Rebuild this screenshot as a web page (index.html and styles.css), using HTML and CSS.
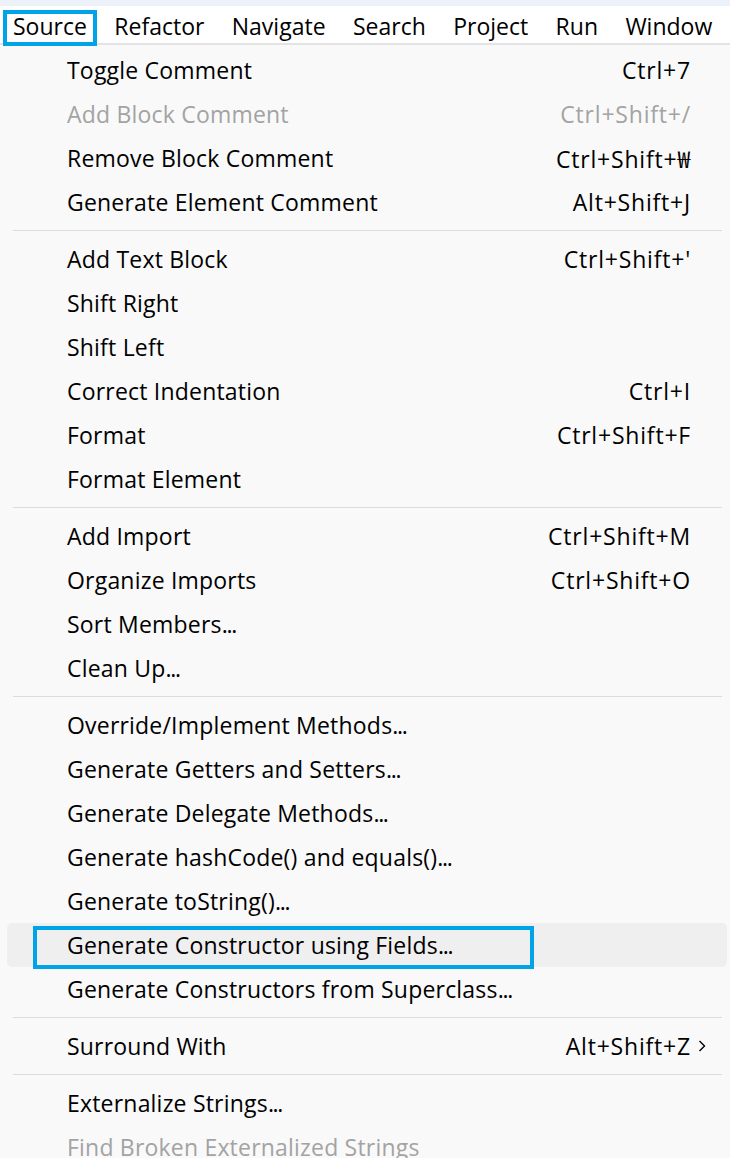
FILE: index.html
```html
<!DOCTYPE html>
<html lang="en">
<head>
<meta charset="utf-8">
<title>Source menu</title>
<link rel="stylesheet" href="styles.css">
</head>
<body>
<div class="topstrip"></div>
<nav class="menubar">
  <span class="mb-item active">Source</span>
  <span class="mb-item">Refactor</span>
  <span class="mb-item">Navigate</span>
  <span class="mb-item">Search</span>
  <span class="mb-item">Project</span>
  <span class="mb-item">Run</span>
  <span class="mb-item">Window</span>
</nav>
<div class="menu">
  <div class="row"><span class="label">Toggle Comment</span><span class="key">Ctrl+7</span></div>
  <div class="row disabled"><span class="label">Add Block Comment</span><span class="key">Ctrl+Shift+/</span></div>
  <div class="row"><span class="label">Remove Block Comment</span><span class="key">Ctrl+Shift+₩</span></div>
  <div class="row"><span class="label">Generate Element Comment</span><span class="key">Alt+Shift+J</span></div>
  <div class="sep"></div>
  <div class="row"><span class="label">Add Text Block</span><span class="key">Ctrl+Shift+'</span></div>
  <div class="row"><span class="label">Shift Right</span></div>
  <div class="row"><span class="label">Shift Left</span></div>
  <div class="row"><span class="label">Correct Indentation</span><span class="key">Ctrl+I</span></div>
  <div class="row"><span class="label">Format</span><span class="key">Ctrl+Shift+F</span></div>
  <div class="row"><span class="label">Format Element</span></div>
  <div class="sep"></div>
  <div class="row"><span class="label">Add Import</span><span class="key">Ctrl+Shift+M</span></div>
  <div class="row"><span class="label">Organize Imports</span><span class="key">Ctrl+Shift+O</span></div>
  <div class="row"><span class="label">Sort Members<span class="dots">...</span></span></div>
  <div class="row"><span class="label">Clean Up<span class="dots">...</span></span></div>
  <div class="sep"></div>
  <div class="row"><span class="label">Override/Implement Methods<span class="dots">...</span></span></div>
  <div class="row"><span class="label">Generate Getters and Setters<span class="dots">...</span></span></div>
  <div class="row"><span class="label">Generate Delegate Methods<span class="dots">...</span></span></div>
  <div class="row"><span class="label">Generate hashCode() and equals()<span class="dots">...</span></span></div>
  <div class="row"><span class="label">Generate toString()<span class="dots">...</span></span></div>
  <div class="row hover marked"><span class="label">Generate Constructor using Fields<span class="dots">...</span></span></div>
  <div class="row"><span class="label">Generate Constructors from Superclass<span class="dots">...</span></span></div>
  <div class="sep"></div>
  <div class="row"><span class="label">Surround With</span><span class="key">Alt+Shift+Z</span><svg class="arrow" width="10" height="14" viewBox="0 0 10 14"><polyline points="2.5,2 7.5,7 2.5,12" fill="none" stroke="#000" stroke-width="1.4"/></svg></div>
  <div class="sep"></div>
  <div class="row"><span class="label">Externalize Strings<span class="dots">...</span></span></div>
  <div class="row disabled"><span class="label">Find Broken Externalized Strings</span></div>
</div>
</body>
</html>
```

FILE: styles.css
```css
html, body {
  margin: 0;
  padding: 0;
  background: #f9f9f9;
  font-family: "Open Sans", "Noto Sans CJK KR", sans-serif;
  font-size: 23px;
  color: #000;
  overflow: hidden;
}

.topstrip {
  height: 6px;
  background: #edf2fa;
}

.menubar {
  height: 33px;
  padding-top: 4px;
  background: #fff;
  border-bottom: 2px solid #e3e3e3;
  display: flex;
  align-items: center;
  gap: 27.4px;
  padding-left: 13px;
  white-space: nowrap;
}

.mb-item {
  line-height: 33px;
  position: relative;
}

.mb-item.active::after {
  content: "";
  position: absolute;
  left: -10px;
  right: -10px;
  top: 0;
  bottom: -3px;
  border: 4px solid #00a2e8;
}

.menu {
  padding: 3px 3px 0 7px;
}

.row {
  height: 44px;
  display: flex;
  align-items: center;
  padding-left: 60px;
  padding-right: 36px;
  white-space: nowrap;
  position: relative;
  border-radius: 5px;
  letter-spacing: 0.2px;
}

.row .label {
  flex: 1;
}

.row .dots {
  letter-spacing: -1.3px;
}

.row .key {
  text-align: right;
  letter-spacing: 0.8px;
}

.row .arrow {
  position: absolute;
  right: 20px;
  top: 15px;
}

.row.disabled {
  color: #a3a3a3;
}

.row.hover {
  background: #efefef;
}

.row.marked::after {
  content: "";
  position: absolute;
  left: 26px;
  top: 3px;
  width: 493px;
  height: 35px;
  border: 4px solid #00a2e8;
}

.sep {
  height: 1px;
  background: #dcdcdc;
  margin: 6px 5px 6px 6px;
}
```
